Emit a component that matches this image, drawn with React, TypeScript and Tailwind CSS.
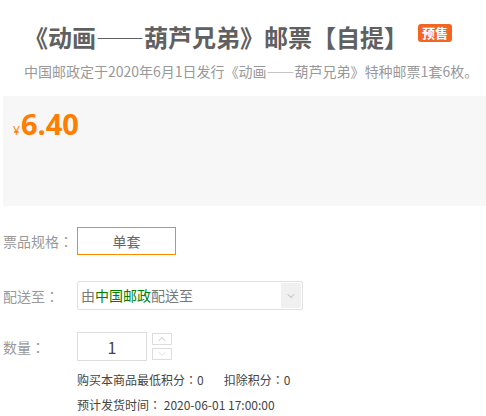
import { ChevronDown, ChevronUp } from 'lucide-react';

const cjk = "font-['Noto_Sans_CJK_SC',sans-serif]";
// full-width punctuation forms (《》—— come out narrow otherwise)
const fw = "[font-feature-settings:'fwid']";

// colon drawn centred in its cell, as in the reference
function Colon() {
  return <span className="font-['Noto_Sans_CJK_TC',sans-serif]">：</span>;
}

function Label({ children }: { children: React.ReactNode }) {
  return (
    <div className="w-[74px] shrink-0 text-[14px] leading-[20px] text-[#999]">
      {children}
      <Colon />
    </div>
  );
}

export default function App() {
  return (
    <div className={`w-[486px] h-[416px] overflow-hidden bg-white ${cjk}`}>
      {/* Header */}
      <div className="pl-[24px] pt-[20px]">
        <div className="flex items-start">
          <h1 className={`text-[24px] leading-[34px] font-bold text-[#606060] ${fw}`}>《动画——葫芦兄弟》邮票【自提】</h1>
          <span className="ml-[10px] mt-[4px] rounded-[3px] bg-[#f26522] px-[4px] text-[13px] leading-[18px] font-bold text-white">
            预售
          </span>
        </div>
        <p className="mt-[7px] text-[14px] leading-[20px] text-[#999]">
          中国邮政定于2020年6月1日发行<span className={fw}>《动画——葫芦兄弟》</span>特种邮票1套6枚。
        </p>
      </div>

      {/* Price */}
      <div className="ml-[3px] mt-[15px] h-[110px] bg-[#f7f7f7] pl-[10px] pt-[14px]">
        <div className="flex items-baseline text-[#ff7d00]">
          <span className="text-[12px] font-['Open_Sans',sans-serif]">¥</span>
          <span className="ml-[1px] text-[29px] leading-[28px] font-bold font-['Open_Sans',sans-serif]">6.40</span>
        </div>
      </div>

      {/* Options */}
      <div className="pl-[3px]">
        <div className="mt-[21px] flex items-center">
          <Label>票品规格</Label>
          <div className="flex h-[28px] w-[99px] items-center justify-center border border-[#ff8a00] text-[14px] text-[#666]">
            单套
          </div>
        </div>

        <div className="mt-[26px] flex items-center">
          <Label>配送至</Label>
          <div className="flex h-[29px] w-[226px] items-center justify-between rounded-[2px] border border-[#e0e0e0] pl-[3px] pr-[1px]">
            <span className="text-[14px] text-[#777]">
              由<span className="text-[#008000]">中国邮政</span>配送至
            </span>
            <span className="flex h-[25px] w-[20px] items-center justify-center bg-[#f0f0f0]">
              <ChevronDown size={12} strokeWidth={1.2} className="text-[#888]" />
            </span>
          </div>
        </div>

        <div className="mt-[22px] flex items-center">
          <Label>数量</Label>
          <div className="flex h-[29px] w-[70px] items-center justify-center border border-[#ddd] text-[16px] text-[#445]">
            1
          </div>
          <div className="ml-[5px] flex flex-col gap-[3px]">
            <span className="flex h-[12px] w-[20px] items-center justify-center border border-[#ddd]">
              <ChevronUp size={12} strokeWidth={1.2} className="text-[#999]" />
            </span>
            <span className="flex h-[12px] w-[20px] items-center justify-center border border-[#ddd]">
              <ChevronDown size={12} strokeWidth={1.2} className="text-[#ccc]" />
            </span>
          </div>
        </div>

        <div className="ml-[74px] mt-[9px] text-[12px] leading-[20px] text-[#444]">
          <div>
            购买本商品最低积分<Colon />0<span className="ml-[20px]">扣除积分<Colon />0</span>
          </div>
          <div className="mt-[5px]">
            预计发货时间<Colon /> 2020-06-01 17:00:00
          </div>
        </div>
      </div>
    </div>
  );
}
